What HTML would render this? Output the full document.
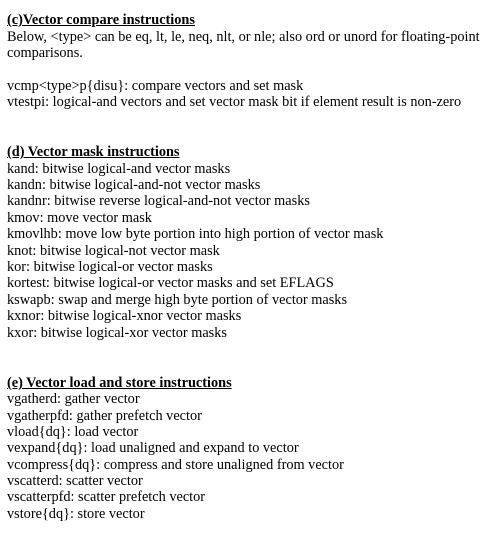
<!DOCTYPE html>
<html><head><style>
body{margin:0;width:497px;height:539px;background:#fff;position:relative;overflow:hidden;font-family:"Liberation Serif",serif;font-size:14.3px;color:#000}
div{position:absolute;left:7px;line-height:16px;white-space:nowrap}
.h{font-weight:bold;text-decoration:underline}
</style></head><body>
<div class="h" style="top:12px">(c)Vector compare instructions</div>
<div style="top:29px">Below, &lt;type&gt; can be eq, lt, le, neq, nlt, or nle; also ord or unord for floating-point</div>
<div style="top:45px">comparisons.</div>
<div style="top:78px">vcmp&lt;type&gt;p{disu}: compare vectors and set mask</div>
<div style="top:94px">vtestpi: logical-and vectors and set vector mask bit if element result is non-zero</div>
<div class="h" style="top:144px">(d) Vector mask instructions</div>
<div style="top:161px">kand: bitwise logical-and vector masks</div>
<div style="top:177px">kandn: bitwise logical-and-not vector masks</div>
<div style="top:193px">kandnr: bitwise reverse logical-and-not vector masks</div>
<div style="top:210px">kmov: move vector mask</div>
<div style="top:226px">kmovlhb: move low byte portion into high portion of vector mask</div>
<div style="top:243px">knot: bitwise logical-not vector mask</div>
<div style="top:259px">kor: bitwise logical-or vector masks</div>
<div style="top:275px">kortest: bitwise logical-or vector masks and set EFLAGS</div>
<div style="top:292px">kswapb: swap and merge high byte portion of vector masks</div>
<div style="top:308px">kxnor: bitwise logical-xnor vector masks</div>
<div style="top:325px">kxor: bitwise logical-xor vector masks</div>
<div class="h" style="top:375px">(e) Vector load and store instructions</div>
<div style="top:391px">vgatherd: gather vector</div>
<div style="top:408px">vgatherpfd: gather prefetch vector</div>
<div style="top:424px">vload{dq}: load vector</div>
<div style="top:440px">vexpand{dq}: load unaligned and expand to vector</div>
<div style="top:457px">vcompress{dq}: compress and store unaligned from vector</div>
<div style="top:473px">vscatterd: scatter vector</div>
<div style="top:489px">vscatterpfd: scatter prefetch vector</div>
<div style="top:506px">vstore{dq}: store vector</div>
</body></html>
